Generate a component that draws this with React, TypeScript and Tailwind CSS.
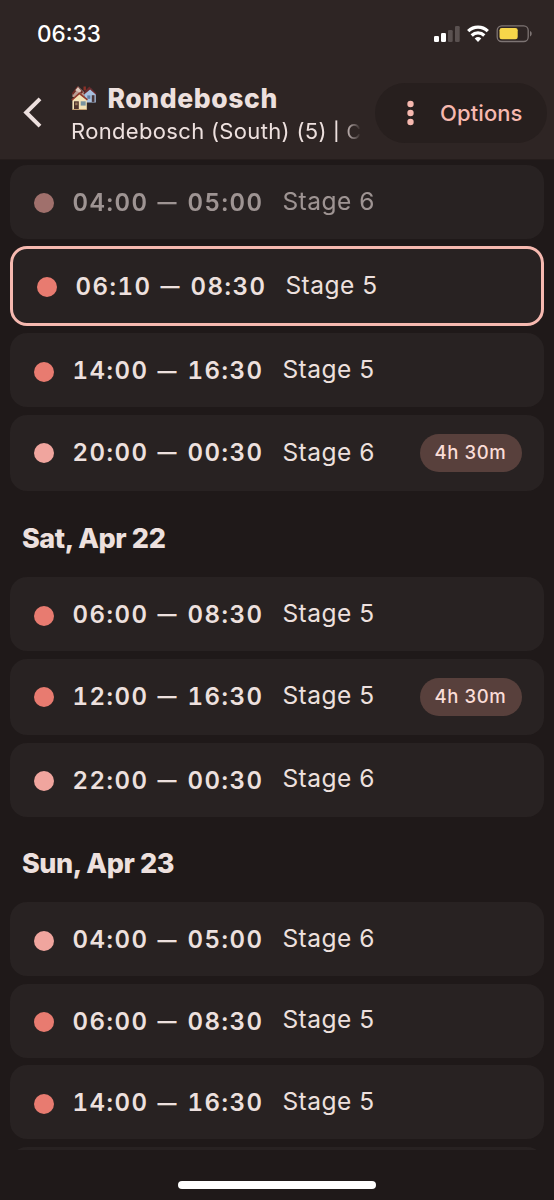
interface Slot {
  start: string;
  end: string;
  stage: 5 | 6;
  duration?: string;
  state?: "past" | "active";
}

const today: Slot[] = [
  { start: "04:00", end: "05:00", stage: 6, state: "past" },
  { start: "06:10", end: "08:30", stage: 5, state: "active" },
  { start: "14:00", end: "16:30", stage: 5 },
  { start: "20:00", end: "00:30", stage: 6, duration: "4h 30m" },
];

const saturday: Slot[] = [
  { start: "06:00", end: "08:30", stage: 5 },
  { start: "12:00", end: "16:30", stage: 5, duration: "4h 30m" },
  { start: "22:00", end: "00:30", stage: 6 },
];

const sunday: Slot[] = [
  { start: "04:00", end: "05:00", stage: 6 },
  { start: "06:00", end: "08:30", stage: 5 },
  { start: "14:00", end: "16:30", stage: 5 },
];

function StatusBar() {
  return (
    <div className="flex h-[68px] items-center justify-between pr-[21px] pl-[37px]">
      <span className="text-[22.5px] font-medium text-white">06:33</span>
      <svg width="100" height="20" viewBox="0 0 100 20">
        {/* Signal */}
        <rect x="1" y="12" width="5" height="6" rx="1.3" fill="#fff" />
        <rect x="8" y="9" width="5" height="9" rx="1.3" fill="#fff" />
        <rect x="15" y="6" width="4.7" height="12" rx="1.3" fill="#5a5150" />
        <rect x="22" y="2" width="4.7" height="16" rx="1.3" fill="#5a5150" />
        {/* Wifi */}
        <g fill="none" stroke="#fff" strokeWidth="3.2">
          <path d="M35.2 7.2a14 14 0 0 1 19.6 0" />
          <path d="M38.7 11.5a9 9 0 0 1 12.6 0" />
        </g>
        <path d="M41.7 14.5a5 5 0 0 1 6.6 0L45 18z" fill="#fff" />
        {/* Battery */}
        <rect x="64.2" y="1.8" width="31" height="15.7" rx="4.5" fill="none" stroke="#7d7473" strokeWidth="1.3" />
        <rect x="66.5" y="4" width="18.2" height="11.3" rx="2.3" fill="#f7d64a" />
        <path d="M97 7v5.4c2.3-.9 2.3-4.5 0-5.4z" fill="#7d7473" />
      </svg>
    </div>
  );
}

function Houses() {
  return (
    <svg width="26" height="26" viewBox="0 0 26 26" className="shrink-0">
      <path d="M1.5 9 7 1.3 13 7v5H1.5z" fill="#b99c92" />
      <path d="M.8 8.5 6.5 1l5.7 6-1.8 1.8-4-4.2L2 10z" fill="#6d2a25" />
      <path d="M4.2 5.2 7 2l3.4 4-1.7 1.4z" fill="#dcc8bd" />
      <path d="M12.5 1.5h2.4v4h-2.4z" fill="#8b3128" />
      <path d="M13 8.5 19.5 3l5.3 6v8.5H14z" fill="#a8c0df" />
      <path d="M12.3 8 18.3 1.6l7.2 7-.8 1-5.6-5-6 4.8z" fill="#6b2a2c" />
      <path d="M20.8 10.2h2.7v6.7h-2.7z" fill="#4a3638" />
      <path d="M16.3 10.4h3v3.4h-3z" fill="#607ea6" />
      <path d="M1.4 15 8.5 8.2l7.3 6.6v9.8H1.4z" fill="#f3e2b6" />
      <path d="M.3 14.6 8.4 7.2l8.5 7.1-.9 1.1-7.6-6-7.2 6.4z" fill="#913a2c" />
      <path d="M3 16.3h4.8V24H3z" fill="#4e332b" />
      <path d="M4.2 17.5h2.4v2.7H4.2z" fill="#98785a" />
      <path d="M9.7 16.3h5v4.3h-5z" fill="#7894a0" />
      <path d="M1.4 24h14.4v1H1.4z" fill="#c39f72" />
    </svg>
  );
}

function Header() {
  return (
    <header className="h-[160px] shrink-0 border-b border-[#251d1c] bg-[#2e2524]">
      <StatusBar />
      <div className="flex items-start">
        <svg width="71" height="91" viewBox="0 0 71 91" className="shrink-0">
          <path d="M40 30.8 26.2 44.5 40 58.2" fill="none" stroke="#ede0de" strokeWidth="4" />
        </svg>
        <div className="w-[290px] shrink-0 pt-[14px] whitespace-nowrap text-[#ede0de]">
          <div className="flex h-8 items-center">
            <Houses />
            <h1 className="mt-[2px] ml-[10.5px] text-[26.5px] font-extrabold tracking-[0.6px]">Rondebosch</h1>
          </div>
          <p className="h-8 mask-r-from-[272px] mask-r-to-[290px] text-[22px] leading-[34px] tracking-[0.33px]">
            Rondebosch (South) (5) <span className="relative -top-px text-[18px] font-medium">|</span>{" "}
            <span className="text-[20px]">C</span>
          </p>
        </div>
        <button className="mt-[15px] ml-[14px] flex h-[60px] w-[172px] shrink-0 items-center rounded-full bg-[#271f1e] pl-[31px] text-[#f6b8af]">
          <svg width="9" height="26" viewBox="0 0 9 26" fill="currentColor">
            <circle cx="4.5" cy="4" r="3.2" />
            <circle cx="4.5" cy="13" r="3.2" />
            <circle cx="4.5" cy="22" r="3.2" />
          </svg>
          <span className="ml-[25px] text-[22px] font-medium tracking-[0.1px]">Options</span>
        </button>
      </div>
    </header>
  );
}

function SlotCard({ slot }: { slot: Slot }) {
  const active = slot.state === "active";
  const past = slot.state === "past";

  return (
    <div
      className={`flex shrink-0 items-center rounded-[17px] bg-[#282222] ${
        active
          ? "-mt-[0.5px] h-20 border-3 border-[#f6b9b0] px-[21px]"
          : slot.duration
            ? "h-[76.5px] pr-[22px] pl-[24px]"
            : "h-[74px] pr-[22px] pl-[24px]"
      }`}
    >
      <div className={`flex flex-1 items-center ${past ? "opacity-60" : ""} ${active ? "pl-[3px]" : ""}`}>
        <span
          className={`size-[20px] shrink-0 rounded-full ${slot.duration ? "" : "mt-[3px]"} ${slot.stage === 5 ? "bg-[#e87b70]" : "bg-[#f0a59e]"}`}
        />
        <span
          className={`ml-[18px] flex w-[210px] items-center text-[24px] font-[570] tracking-[1.5px] whitespace-nowrap tabular-nums ${slot.duration ? "" : "mt-[2px]"}`}
        >
          <span className="w-[85px]">{slot.start}</span>
          <span className="mt-px w-[30px] text-[19px] font-bold">—</span>
          <span>{slot.end}</span>
        </span>
        <span className="relative -top-px text-[24.5px] tracking-[0.5px]">Stage {slot.stage}</span>
      </div>
      {slot.duration && (
        <span className="flex h-[38px] w-[102px] items-center justify-center rounded-full bg-[#58403c] text-[18.5px] font-medium tracking-[0.6px] text-[#fadcd7]">
          {slot.duration}
        </span>
      )}
    </div>
  );
}

function DayHeading({ children }: { children: string }) {
  return (
    <h2 className="flex h-[70.7px] shrink-0 items-center pt-[10px] pl-[11.5px] text-[27px] font-extrabold tracking-[-0.4px]">
      {children}
    </h2>
  );
}

export default function App() {
  return (
    <div className="flex h-[1200px] w-[554px] flex-col overflow-hidden bg-[#1f1919] font-['Inter',sans-serif]">
      <Header />
      <main className="flex h-[990px] shrink-0 flex-col gap-[7.5px] overflow-hidden pt-[4.9px] pr-[10.5px] pl-[10.4px] text-[#ede0de]">
        {today.map((slot) => (
          <SlotCard key={slot.start} slot={slot} />
        ))}
        <DayHeading>Sat, Apr 22</DayHeading>
        {saturday.map((slot) => (
          <SlotCard key={slot.start} slot={slot} />
        ))}
        <DayHeading>Sun, Apr 23</DayHeading>
        {sunday.map((slot) => (
          <SlotCard key={slot.start} slot={slot} />
        ))}
        <div className="h-[74px] shrink-0 rounded-[17px] bg-[#282222]" />
      </main>
      {/* Home indicator */}
      <div className="mt-[30.5px] ml-[178px] h-[8px] w-[198px] rounded-full bg-white" />
    </div>
  );
}
